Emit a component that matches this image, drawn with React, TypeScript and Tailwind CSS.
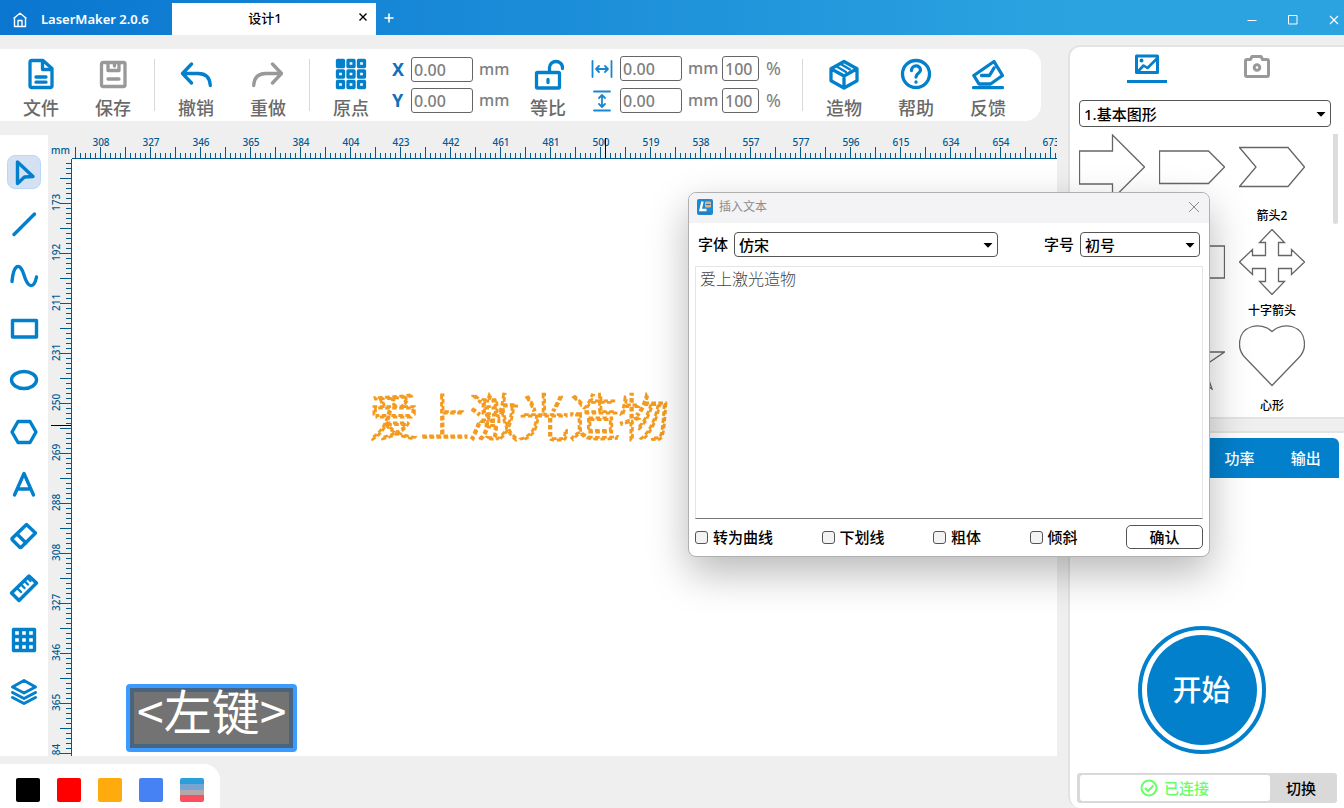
import React from 'react';

const topLabels = [308, 327, 346, 365, 384, 404, 423, 442, 461, 481, 500, 519, 538, 557, 577, 596, 615, 634, 654, 673];
const sideLabels = [173, 192, 211, 231, 250, 269, 288, 308, 327, 346, 365, 384];

type IconProps = { children: React.ReactNode; className?: string };

const ToolIcon = ({ children, className = 'text-[#0380cc]' }: IconProps) => (
    <svg
        viewBox="0 0 32 32"
        className={`h-8 w-8 ${className}`}
        fill="none"
        stroke="currentColor"
        strokeWidth="3.300"
        strokeLinecap="round"
        strokeLinejoin="round"
    >
        {children}
    </svg>
);

const ToolButton = ({ label, children }: { label: string; children: React.ReactNode }) => (
    <button
        type="button"
        className="flex w-[72px] shrink-0 flex-col items-center gap-[5px] pt-[9px] text-lg leading-[26px] font-medium text-[#6a6a6a]"
    >
        {children}
        {label}
    </button>
);

const Divider = () => <div className="mx-[5px] mt-[10px] h-[52px] w-px shrink-0 bg-[#d9d9d9]" />;

const Field = ({ label, value, width }: { label: string; value: string; width: string }) => (
    <input
        aria-label={label}
        defaultValue={value}
        className={`h-[25px] rounded-[3px] border border-[#666] bg-white px-[2px] text-base leading-none font-medium text-[#808080] ${width}`}
    />
);

const Toolbar = () => (
    <div className="mr-[27px] flex h-[72px] shrink-0 rounded-r-2xl bg-white pl-[5px]">
        <ToolButton label="文件">
            <ToolIcon>
                <path d="M18 2.5H6.5A1.5 1.5 0 0 0 5 4v24a1.5 1.5 0 0 0 1.500 1.500h19A1.500 1.500 0 0 0 27 28V10.500z" />
                <path d="M17.500 4v7.500H26M11 19h10M11 24.200h10" />
            </ToolIcon>
        </ToolButton>
        <ToolButton label="保存">
            <ToolIcon className="text-[#999]">
                <rect x="4.500" y="4.500" width="23.500" height="24" rx="1.500" />
                <path d="M11 5v7.500h11V5M17.500 6v2M11 21h11" />
            </ToolIcon>
        </ToolButton>
        <Divider />
        <ToolButton label="撤销">
            <ToolIcon>
                <path d="M11.500 6 2.500 15.500l9 9.500M3 15.500h15c8 0 12 4.500 12.300 12" />
            </ToolIcon>
        </ToolButton>
        <ToolButton label="重做">
            <ToolIcon className="text-[#999]">
                <path d="m20.500 6 9 9.500-9 9.500M29 15.500H14c-8 0-12 4.500-12.300 12" />
            </ToolIcon>
        </ToolButton>
        <Divider />
        <ToolButton label="原点">
            <ToolIcon>
                {[2.5, 13, 23.5].map((y) =>
                    [2.5, 13, 23.5].map((x) => (
                        <rect
                            key={`${x}-${y}`}
                            x={x}
                            y={y}
                            width="6"
                            height="6"
                            fill={x + y === 5 ? 'currentColor' : 'none'}
                        />
                    ))
                )}
            </ToolIcon>
        </ToolButton>
        <div className="flex w-[125px] shrink-0 flex-col gap-[6px] pt-2 pl-[5px] text-base leading-[25px] font-medium text-[#808080]">
            {['X', 'Y'].map((axis) => (
                <div key={axis} className="flex">
                    <span className="w-[19px] text-lg leading-[25px] font-bold text-[#1271bd]">{axis}</span>
                    <Field label={axis} value="0.00" width="w-[62px]" />
                    <span className="pl-[6px]">mm</span>
                </div>
            ))}
        </div>
        <ToolButton label="等比">
            <ToolIcon>
                <rect x="4.500" y="14.500" width="23" height="15.500" rx="1" />
                <path d="M17.500 14v-4.500a6.500 6 0 0 1 13 0v1M16 21.500v3" />
            </ToolIcon>
        </ToolButton>
        <div className="flex w-[213px] shrink-0 flex-col gap-[7px] pt-[7px] pl-[7px] text-base leading-[25px] font-medium text-[#808080]">
            {['宽', '高'].map((side) => (
                <div key={side} className="flex items-center">
                    <svg
                        viewBox="0 0 22 22"
                        className={`mr-[7px] h-[22px] w-[22px] text-[#1a86d0] ${side === '高' ? 'rotate-90' : ''}`}
                        fill="none"
                        stroke="currentColor"
                        strokeWidth="1.800"
                        strokeLinecap="round"
                        strokeLinejoin="round"
                    >
                        <path d="M1.500 3v16M20.500 3v16M5 11h12M8 8l-3 3 3 3M14 8l3 3-3 3" />
                    </svg>
                    <Field label={side} value="0.00" width="w-[62px]" />
                    <span className="w-10 pl-[6px]">mm</span>
                    <Field label={`${side} %`} value="100" width="w-[37px]" />
                    <span className="pl-[7px] text-lg leading-[25px] font-normal">%</span>
                </div>
            ))}
        </div>
        <Divider />
        <ToolButton label="造物">
            <ToolIcon>
                <path d="m16 3.500 13 7.300v12L16 30 3 22.800v-12zM3 10.800 16 18l13-7.200M16 18v12" />
                <path d="m13.500 6.500 8.500 5M9.500 9l8.500 5" strokeWidth="2.400" />
            </ToolIcon>
        </ToolButton>
        <ToolButton label="帮助">
            <ToolIcon>
                <circle cx="16" cy="16" r="13.500" />
                <path d="M11.500 12.500c0-6 9-6 9-.5 0 3.500-4.500 3-4.500 7M16 24v.2" />
            </ToolIcon>
        </ToolButton>
        <ToolButton label="反馈">
            <ToolIcon>
                <path d="M7 26 1.800 17.500 22 3.500l8.500 14-12 8.500zM1.500 29.700h29M9.500 17.500h8l4.500-7.500" />
            </ToolIcon>
        </ToolButton>
    </div>
);

const sideTools: { name: string; icon: React.ReactNode }[] = [
    { name: '选择', icon: <path d="M10.500 7v21.500L17.500 22l8.500-.5z" /> },
    { name: '直线', icon: <path d="M27.500 7 7 27.500" /> },
    { name: '曲线', icon: <path d="M5 22.500C6.500 5 13 2.500 17 16s10 14 12.500 2" /> },
    { name: '矩形', icon: <rect x="5.500" y="9.500" width="24" height="16.500" /> },
    { name: '椭圆', icon: <ellipse cx="17" cy="17" rx="12.500" ry="8.500" /> },
    { name: '多边形', icon: <path d="M11 6.500h12L29 17l-6 10.500H11L5 17z" /> },
    { name: '文本', icon: <path d="M7.500 28 17 6.500 26.500 28M10.500 22h13" /> },
    { name: '橡皮', icon: <path d="m19.500 5.500 9 8.500-14 14q-1 1-2 0L5.500 21q-1-1 0-2zM10 15l9 9" /> },
    {
        name: '测量',
        icon: (
            <>
                <path d="m22 5 7.500 7L12 29.500 4.500 22z" />
                <path d="m10 17 4 4M14 13.500l3.500 3.500M17.500 10l3.500 3.500M20.500 7l3 3" strokeWidth="2.400" />
            </>
        ),
    },
    { name: '阵列', icon: <path d="M6.500 6.500h21v21h-21zM13.500 6.500v21M20.500 6.500v21M6.500 13.500h21M6.500 20.500h21" /> },
    {
        name: '图层',
        icon: <path d="M17 5.500 28.500 12 17 18 5.500 12zM5.500 17.500 17 23.500l11.500-6M5.500 22.500 17 28.500l11.500-6" strokeWidth="3" />,
    },
];

const SideTools = () => (
    <div className="flex w-12 shrink-0 flex-col items-center gap-[18px] bg-white pt-5">
        {sideTools.map((t, i) => (
            <button
                key={t.name}
                type="button"
                aria-label={t.name}
                className={`h-[34px] w-[34px] shrink-0 rounded-lg ${i === 0 ? 'border border-[#b9d8f8] bg-[#d3e1f3]' : 'border border-transparent'}`}
            >
                <svg
                    viewBox="1 1 32 32"
                    className="h-8 w-8 text-[#0380cc]"
                    fill="none"
                    stroke="currentColor"
                    strokeWidth="3.400"
                    strokeLinecap="round"
                    strokeLinejoin="round"
                >
                    {t.icon}
                </svg>
            </button>
        ))}
    </div>
);

const Workspace = () => (
    <div className="flex min-h-0 flex-1">
        <SideTools />
        <div className="mr-[11px] flex min-w-0 flex-1 flex-col">
            <div className="flex h-6 shrink-0 text-[10px] leading-[14px] font-medium text-[#005a92]">
                <div className="w-6 shrink-0 pt-2 pl-[3px]">mm</div>
                <div className="relative flex min-w-0 flex-1 overflow-hidden pl-1">
                    {topLabels.map((n) => (
                        <span key={n} className="w-[50px] shrink-0 text-center">
                            {n}
                        </span>
                    ))}
                    <svg className="absolute inset-0 h-full w-full" shapeRendering="crispEdges">
                        <defs>
                            <pattern id="ticks-x" x="3" width="25" height="24" patternUnits="userSpaceOnUse">
                                <path d="M.5 12v12M5.500 18v6M10.500 18v6M15.500 18v6M20.500 18v6" stroke="#005a8c" />
                            </pattern>
                        </defs>
                        <rect width="100%" height="100%" fill="url(#ticks-x)" />
                        <path d="M0 23.500h4000" stroke="#005a8c" />
                        <path d="M533.500 3v20" stroke="#000" />
                    </svg>
                </div>
            </div>
            <div className="flex min-h-0 flex-1">
                <div className="relative flex w-6 shrink-0 flex-col overflow-hidden text-[10px] leading-4 font-medium text-[#005a92]">
                    <span className="h-[18px] shrink-0" />
                    {sideLabels.map((n) => (
                        <span key={n} className="h-[50px] w-4 shrink-0 rotate-180 text-center [writing-mode:vertical-rl]">
                            {n}
                        </span>
                    ))}
                    <svg className="absolute inset-0 h-full w-full" shapeRendering="crispEdges">
                        <defs>
                            <pattern id="ticks-y" y="19" width="24" height="25" patternUnits="userSpaceOnUse">
                                <path d="M12 .5h12M18 5.500h6M18 10.500h6M18 15.500h6M18 20.500h6" stroke="#005a8c" />
                            </pattern>
                        </defs>
                        <rect width="100%" height="100%" fill="url(#ticks-y)" />
                        <path d="M23.500 0v4000" stroke="#005a8c" />
                        <path d="M3 266.500h20" stroke="#000" />
                    </svg>
                </div>
                <div className="relative min-w-0 flex-1 bg-white">
                    <svg className="absolute top-[226px] left-[296px] h-[64px] w-[310px] overflow-visible">
                        <text
                            x="1"
                            y="51"
                            fill="none"
                            stroke="#f39a1f"
                            strokeWidth="2.800"
                            strokeDasharray="4.500 2.500"
                            className="font-['Noto_Sans_CJK_SC',sans-serif] text-[50px] font-thin"
                        >
                            爱上激光造物
                        </text>
                    </svg>
                    <div className="absolute bottom-1 left-[54px] rounded-[4px] bg-[#3b9bff] p-1">
                        <div className="h-[60px] border-4 border-[#486480] bg-[#737373] px-[3px] font-['Noto_Sans_CJK_SC',sans-serif] text-5xl leading-[34px] font-normal text-white">
                            &lt;左键&gt;
                        </div>
                    </div>
                </div>
            </div>
        </div>
    </div>
);

const Palette = () => (
    <div className="mt-2 flex h-11 w-[220px] shrink-0 gap-[17px] rounded-tr-2xl bg-white pt-[14px] pl-4">
        <button type="button" aria-label="黑色" className="h-6 w-6 rounded-[2px] bg-black" />
        <button type="button" aria-label="红色" className="h-6 w-6 rounded-[2px] bg-[#ff0000]" />
        <button type="button" aria-label="橙色" className="h-6 w-6 rounded-[2px] bg-[#ffab0d]" />
        <button type="button" aria-label="蓝色" className="h-6 w-6 rounded-[2px] bg-[#4682f4]" />
        <button type="button" aria-label="更多颜色" className="h-6 w-6 overflow-hidden rounded-[2px]">
            <div className="h-[6px] bg-[#2b9fdc]" />
            <div className="h-[6px] bg-[#78a4d4]" />
            <div className="h-[5px] bg-[#b3a9ab]" />
            <div className="h-[7px] bg-[#fa4f5e]" />
        </button>
    </div>
);

type SelectProps = { id: string; value: string; className: string };

const Select = ({ id, value, className }: SelectProps) => (
    <div className={`relative ${className}`}>
        <select
            id={id}
            aria-label={value}
            className="h-full w-full appearance-none rounded-[4px] border border-[#555] bg-white pl-[4px] text-[15px] leading-5 font-medium text-black"
        >
            <option>{value}</option>
        </select>
        <svg viewBox="0 0 10 5" className="pointer-events-none absolute top-1/2 right-[5px] -mt-[2px] h-[5px] w-[10px]">
            <path d="M.5 0h9L5 4.800z" />
        </svg>
    </div>
);

// each shape is drawn on a 66 x 66 box
const shapes = [
    { name: '', path: 'M.5 17h33V1l32 32-32 32V50H.5z' },
    { name: '', path: 'M.5 17h49l16 16-16 16.500h-49z' },
    { name: '箭头2', path: 'M.5 13.500h48.500L65.500 33 49 52.500H.500L17 33z' },
    { name: '', path: 'M.5 17h65v32H.5z' },
    { name: '', path: 'M.5 17h65v32H.5z' },
    {
        name: '十字箭头',
        path: 'M33 .5 45.500 13.500H39.500V26.500H52.500V20.500L65.500 33 52.500 45.500V39.500H39.500V52.500H45.500L33 65.500 20.500 52.500H26.500V39.500H13.500V45.500L.5 33 13.500 20.500V26.500H26.500V13.500H20.500z',
    },
    { name: '', path: 'M33 2 65 62H1z' },
    { name: '', path: 'm33 4 7.500 24h25L45 42l8 23-20-14-20 14 8-23L.5 28h25z' },
    { name: '心形', path: 'M33 7.500C22-3 .5 1 .5 20.500c0 6 2.500 10 6 13.500L33 61.500 59.500 34c3.500-3.500 6-7.500 6-13.500C65.500 1 44-3 33 7.500z' },
];

const ShapePanel = () => (
    <section className="flex h-[374px] shrink-0 flex-col rounded-tl-xl border-2 border-r-0 border-[#e3e3e3] bg-white pl-[9px]">
        <div className="flex pl-12">
            <button type="button" aria-label="图库" className="flex h-9 w-10 justify-center border-b-[3px] border-[#0380cc] pt-[6px]">
                <svg viewBox="0 0 26 24" className="h-6 w-[26px] text-[#0380cc]" fill="none" stroke="currentColor" strokeWidth="3" strokeLinejoin="round">
                    <rect x="2.500" y="3" width="21" height="16.500" />
                    <path d="m3.500 19 6-6.500 4 2.500L23 5.500" strokeWidth="2.600" />
                    <circle cx="7.500" cy="7.500" r="1" strokeWidth="2" />
                </svg>
            </button>
            <button type="button" aria-label="拍照" className="ml-[76px] flex pt-[6px]">
                <svg viewBox="0 0 28 26" className="h-[26px] w-7 text-[#999]" fill="none" stroke="currentColor" strokeWidth="3" strokeLinejoin="round">
                    <path d="M4 6.500h3.500l1.500-3h9l1.500 3H24a1.500 1.500 0 0 1 1.500 1.500v14a1.500 1.500 0 0 1-1.500 1.500H4A1.500 1.500 0 0 1 2.500 22V8A1.500 1.500 0 0 1 4 6.500z" />
                    <circle cx="14" cy="14.500" r="2.800" />
                </svg>
            </button>
        </div>
        <Select id="library" value="1.基本图形" className="mt-[17px] mr-[13px] h-[27px]" />
        <div className="mt-[7px] flex min-h-0 flex-1 overflow-hidden">
            <div className="grid w-[240px] auto-rows-[95px] grid-cols-3">
                {shapes.map((s, i) => (
                    <figure key={i} className="w-[66px]">
                        <svg viewBox="0 0 66 66" className="h-[66px] w-[66px]" fill="none" stroke="#666" strokeWidth="1.300">
                            <path d={s.path} />
                        </svg>
                        <figcaption className="mt-[6px] text-center text-xs leading-5 font-medium whitespace-nowrap">
                            {s.name}
                        </figcaption>
                    </figure>
                ))}
            </div>
            <div className="ml-[14px] h-[90px] w-[5px] rounded-b-sm bg-[#dcdcdc]" />
        </div>
    </section>
);

const RunPanel = () => (
    <section className="mt-3 flex min-h-0 flex-1 flex-col rounded-bl-xl border-t-2 border-l-2 border-[#e3e3e3] bg-white pr-[5px] pl-[4px]">
        <table className="mt-[5px] h-10 w-full table-fixed text-[15px] text-white">
            <thead>
                <tr>
                    <th className="rounded-tl-md bg-[#0380cc]" />
                    <th className="bg-[#0380cc]" />
                    <th className="bg-[#0380cc] font-medium">功率</th>
                    <th className="rounded-tr-md bg-[#0380cc] font-medium">输出</th>
                </tr>
            </thead>
        </table>
        <div className="mt-auto flex flex-col items-center">
            <button type="button" className="mr-[10px] h-32 w-32 rounded-full border-4 border-[#0380cc] bg-white p-[5px]">
                <span className="flex h-full w-full items-center justify-center rounded-full bg-[#0380cc] text-[29px] font-medium text-white">
                    开始
                </span>
            </button>
            <div className="mt-[19px] mb-[5px] flex h-[30px] w-[260px] rounded-[3px] bg-[#d9d9d9] text-[15px] leading-[26px]">
                <div className="my-[2px] ml-[3px] flex w-[190px] items-center justify-center gap-[6px] rounded-[3px] bg-white text-[#66ff66]">
                    <svg viewBox="0 0 18 18" className="h-[18px] w-[18px]" fill="none" stroke="currentColor" strokeWidth="2">
                        <circle cx="9" cy="9" r="7.500" />
                        <path d="m5 9 3 3 5.500-5.500" />
                    </svg>
                    <span className="font-medium">已连接</span>
                </div>
                <button type="button" className="flex-1 pr-1 font-medium text-black">
                    切换
                </button>
            </div>
        </div>
    </section>
);

const TextDialog = () => (
    <div
        role="dialog"
        aria-label="插入文本"
        className="absolute top-[192px] left-[688px] w-[522px] rounded-lg border border-[#b0b0b0] bg-white text-[15px] font-medium shadow-[0_16px_40px_rgba(0,0,0,0.28)]"
    >
        <div className="flex h-[30px] items-center rounded-t-lg bg-[#f3f2f5] pr-[9px] pb-[2px] pl-2">
            <svg viewBox="0 0 16 16" className="h-4 w-4">
                <rect width="16" height="16" rx="2" fill="#1b8ad6" />
                <path d="M5.500 2.500 3.500 11h6" fill="none" stroke="#fff" strokeWidth="2.400" />
                <rect x="8" y="2.500" width="6" height="6" rx="1" fill="#e2b184" />
                <path d="M9 5.500h4.500M1.500 14h12" stroke="#506b88" />
            </svg>
            <span className="ml-[6px] flex-1 text-xs font-normal text-[#8c8c8c]">插入文本</span>
            <button type="button" aria-label="关闭">
                <svg viewBox="0 0 12 12" className="h-3 w-3" stroke="#8a8a8a">
                    <path d="m1 1 10 10M11 1 1 11" />
                </svg>
            </button>
        </div>
        <div className="px-[6px] pt-[9px] pb-[7px]">
            <div className="flex items-center pr-[3px] pl-[3px] leading-[25px]">
                <label htmlFor="font">字体</label>
                <Select id="font" value="仿宋" className="ml-[6px] h-[25px] w-[264px]" />
                <label htmlFor="size" className="ml-auto">
                    字号
                </label>
                <Select id="size" value="初号" className="ml-[6px] h-[25px] w-[120px]" />
            </div>
            <textarea
                aria-label="文本内容"
                defaultValue="爱上激光造物"
                className="mt-[9px] block h-[253px] w-full resize-none border border-[#e5e5e5] border-b-[#777] px-[4px] py-0 font-['Noto_Sans_CJK_SC',sans-serif] text-base leading-[22px] font-light text-[#444]"
            />
            <div className="mt-[6px] flex items-center justify-between leading-6">
                {['转为曲线', '下划线', '粗体', '倾斜'].map((t) => (
                    <label key={t} className="flex items-center gap-[5px]">
                        <input type="checkbox" className="h-[13px] w-[13px] appearance-none rounded-[3px] border border-[#555] bg-[#f3f3f3]" />
                        {t}
                    </label>
                ))}
                <button type="button" className="h-6 w-[77px] rounded-[5px] border border-[#555] leading-[22px]">
                    确认
                </button>
            </div>
        </div>
    </div>
);

const TitleBar = () => (
    <header className="flex h-[35px] shrink-0 bg-linear-to-r from-[#0a76d0] to-[#2ba3e0] to-80% text-[13px] text-white">
        <a href="#home" className="flex w-[172px] items-center gap-[13px] pt-1 pl-3 font-semibold">
            <svg viewBox="0 0 16 16" className="h-4 w-4" fill="none" stroke="currentColor" strokeWidth="1.400" strokeLinejoin="round">
                <path d="M1.500 6.500 8 1.200l6.500 5.300M2.500 6v8.500h11V6M6 14.500V8.500h4v6" />
            </svg>
            LaserMaker 2.0.6
        </a>
        <div className="mt-[3px] flex w-[204px] items-center bg-white font-medium text-black">
            <span className="flex-1 text-center">设计1</span>
            <button type="button" aria-label="关闭标签" className="mr-2 pb-1">
                <svg viewBox="0 0 10 10" className="h-[10px] w-[10px]" stroke="#000" strokeWidth="1.400">
                    <path d="m1.500 1.500 7 7M8.500 1.500l-7 7" />
                </svg>
            </button>
        </div>
        <button type="button" aria-label="新建标签" className="ml-2">
            <svg viewBox="0 0 10 10" className="h-[10px] w-[10px]" stroke="#fff" strokeWidth="1.600">
                <path d="M5 .5v9M.5 5h9" />
            </svg>
        </button>
        <div className="ml-auto flex items-center gap-[31px] pt-1 pr-[5px]">
            <button type="button" aria-label="最小化">
                <svg viewBox="0 0 10 10" className="h-[10px] w-[10px]" stroke="#fff">
                    <path d="M.5 5.500h9" />
                </svg>
            </button>
            <button type="button" aria-label="最大化">
                <svg viewBox="0 0 10 10" className="h-[10px] w-[10px]" fill="none" stroke="#fff">
                    <path d="M.5 .5h8.500v8.500H.5z" />
                </svg>
            </button>
            <button type="button" aria-label="关闭窗口">
                <svg viewBox="0 0 10 10" className="h-[10px] w-[10px]" stroke="#fff" strokeWidth="1.200">
                    <path d="m1 1 8 8M9 1 1 9" />
                </svg>
            </button>
        </div>
    </header>
);

const App = () => {
    return (
        <div className="relative flex h-screen w-full flex-col overflow-hidden bg-[#efefef] font-['Noto_Sans','Noto_Sans_CJK_SC',sans-serif] text-black">
            <TitleBar />
            <main className="flex min-h-0 flex-1">
                <div className="flex min-w-0 flex-1 flex-col pt-[14px]">
                    <Toolbar />
                    <div className="h-[14px] shrink-0" />
                    <Workspace />
                    <Palette />
                </div>
                <aside className="flex w-[276px] shrink-0 flex-col pt-[10px]">
                    <ShapePanel />
                    <RunPanel />
                </aside>
            </main>
            <TextDialog />
        </div>
    );
};

export default App;
